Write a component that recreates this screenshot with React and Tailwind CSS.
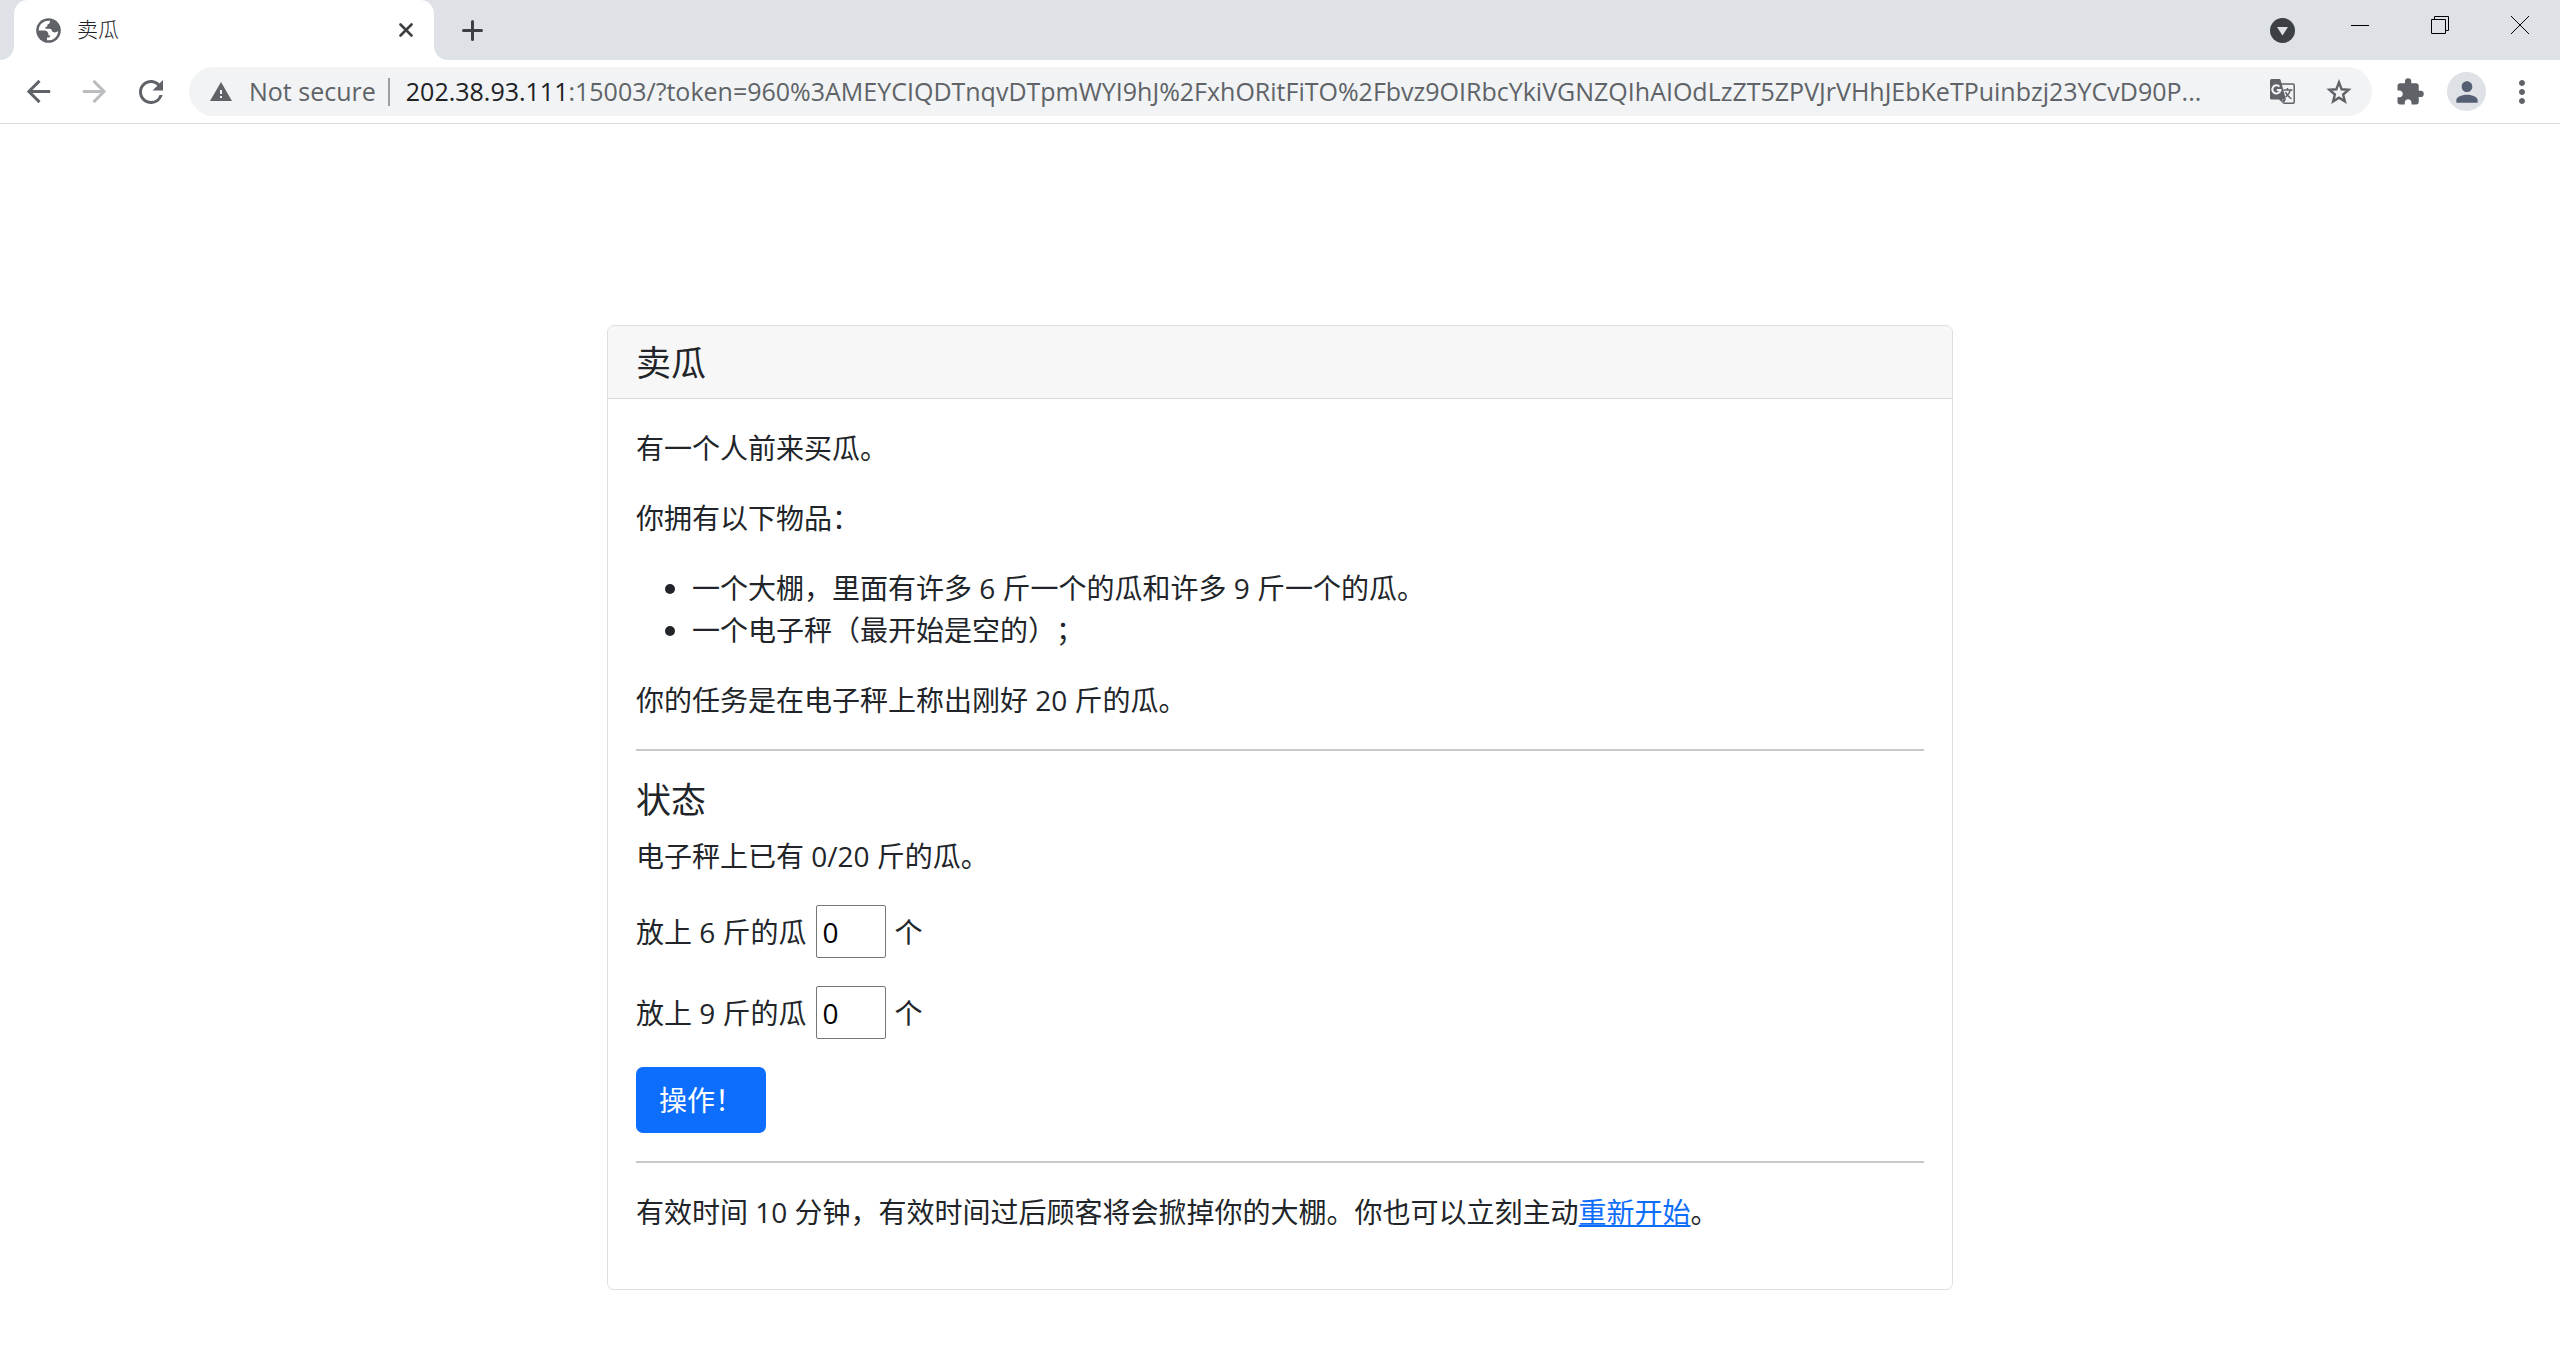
import { useState } from 'react';
import { MdArrowBack, MdArrowForward, MdRefresh, MdWarning, MdExtension, MdPerson, MdMoreVert } from 'react-icons/md';

const host = '202.38.93.111';
const path = ':15003/?token=960%3AMEYCIQDTnqvDTpmWYI9hJ%2FxhORitFiTO%2Fbvz9OIRbcYkiVGNZQIhAIOdLzZT5ZPVJrVHhJEbKeTPuinbzj23YCvD90P...';

function GlobeIcon() {
  return (
    <svg className="size-[25px] shrink-0" viewBox="0 0 25 25" aria-hidden="true">
      <circle cx="12.5" cy="12.5" r="12.3" fill="#5f6368" />
      <path
        fill="#fff"
        d="M2.700 12.500A9.800 9.800 0 0 1 14 2.800C14.200 5 13.300 6 11.500 6.300V7.600C11.500 8.600 10.600 9 9.400 9V10.800H13.500C15.200 10.800 16 11.800 16 13.400C17 13.400 17.500 14.400 18.500 14.400C20 14.400 21 13.600 22.200 13.200A9.800 9.800 0 0 1 11 22.200V19.500H13C14 19.500 14.200 18.600 14.200 17.600H12.600C12.600 14 11 12.500 8 12.500z"
      />
    </svg>
  );
}

function TranslateIcon() {
  return (
    <svg className="h-[26px] w-[25px]" viewBox="0 0 25 26" aria-hidden="true">
      <path d="M11 5h12a1.200 1.200 0 0 1 1.200 1.200V23a1.200 1.200 0 0 1-1.200 1.200H13.500" fill="none" stroke="#5f6368" strokeWidth="1.500" />
      <path d="M1.500 0h7.700a1.500 1.500 0 0 1 1.400 1l5.400 19.500H12l1.800 4.500L9 20.500H1.500A1.500 1.500 0 0 1 0 19V1.500A1.500 1.500 0 0 1 1.500 0z" fill="#5f6368" />
      <path d="M12.500 20.500H16L13.500 24.500z" fill="#5f6368" />
      <path d="M9.500 7.700A4.100 4.100 0 1 0 10.500 11H6.800" fill="none" stroke="#f1f3f4" strokeWidth="2" />
      <path d="M13.500 11H22.500M17.500 9V11M20.500 11C19.500 14.500 17.500 16.500 15.500 18M15.500 13C16.500 15.500 18.500 18 21.500 20" fill="none" stroke="#5f6368" strokeWidth="1.500" />
    </svg>
  );
}

function StarIcon() {
  return (
    <svg className="size-[30px]" viewBox="0 0 24 24" fill="none" stroke="#5f6368" strokeWidth="1.900" aria-hidden="true">
      <path d="M12 4.300L14.100 9.800L19.700 10.200L15.300 14L16.700 19.500L12 16.500L7.300 19.500L8.700 14L4.300 10.200L9.900 9.800z" />
    </svg>
  );
}

function TabStrip() {
  return (
    <div className="flex h-[60px] bg-[#dee1e6]">
      <div className="flex w-[14px] shrink-0 bg-white">
        <div className="w-full rounded-br-[14px] bg-[#dee1e6]" />
      </div>
      <div className="flex w-[420px] items-center rounded-t-[14px] bg-white pr-[18px] pl-[22px]">
        <GlobeIcon />
        <span className="ml-4 flex-1 text-[21px] font-light text-[#202124]">卖瓜</span>
        <button type="button" aria-label="Close tab" className="grid size-5 place-items-center">
          <svg className="size-[14px]" viewBox="0 0 14 14" stroke="#3c4043" strokeWidth="2.6" strokeLinecap="round">
            <path d="M1.500 1.500l11 11M12.500 1.500l-11 11" />
          </svg>
        </button>
      </div>
      <div className="flex w-[14px] shrink-0 bg-white">
        <div className="w-full rounded-bl-[14px] bg-[#dee1e6]" />
      </div>
      <button type="button" aria-label="New tab" className="grid w-12 place-items-center">
        <svg className="size-[21px]" viewBox="0 0 21 21" stroke="#3c4043" strokeWidth="3" strokeLinecap="round">
          <path d="M10.500 1.500v18M1.500 10.500h18" />
        </svg>
      </button>
      <div className="ml-auto flex">
        <button type="button" aria-label="Search tabs" className="grid w-[75px] place-items-center">
          <svg className="size-[25px]" viewBox="0 0 25 25">
            <circle cx="12.500" cy="12.500" r="12.500" fill="#3c4043" />
            <path d="M7 9h11l-5.500 8.500z" fill="#dee1e6" />
          </svg>
        </button>
        <div className="flex h-[50px]">
          <button type="button" aria-label="Minimize" className="grid w-20 place-items-center">
            <svg className="size-[18px]" viewBox="0 0 18 18" shapeRendering="crispEdges">
              <path d="M0 9h18v1H0z" />
            </svg>
          </button>
          <button type="button" aria-label="Restore" className="grid w-20 place-items-center">
            <svg className="size-[18px]" viewBox="0 0 18 18" fill="none" stroke="#000">
              <path d="M.5 3.500h14v14H.5zM3.500 3.500v-3h14v14h-3" />
            </svg>
          </button>
          <button type="button" aria-label="Close" className="grid w-20 place-items-center">
            <svg className="size-[18px]" viewBox="0 0 18 18" stroke="#000">
              <path d="M0 0l18 18M18 0L0 18" />
            </svg>
          </button>
        </div>
      </div>
    </div>
  );
}

function Toolbar() {
  return (
    <div className="flex h-16 items-center border-b border-[#dadce0] bg-white text-[#5f6368]">
      <div className="flex w-[189px] shrink-0 items-center gap-[21px] pl-[21px]">
        <button type="button" aria-label="Back"><MdArrowBack size={35} /></button>
        <button type="button" aria-label="Forward" disabled className="text-[#babcbe]"><MdArrowForward size={35} /></button>
        <button type="button" aria-label="Reload"><MdRefresh size={36} /></button>
      </div>
      <div className="flex h-[49px] min-w-0 flex-1 items-center rounded-full bg-[#f1f3f4] pr-[18px] pl-5 text-[25px]">
        <button type="button" className="flex shrink-0 items-center gap-4">
          <MdWarning size={24} />
          Not secure
        </button>
        <span className="mr-4 ml-3 h-7 w-[2px] bg-[#9aa0a6]" />
        <label htmlFor="url" className="text-[#202124]">{host}</label>
        <input id="url" type="text" defaultValue={path} className="min-w-0 flex-1 text-ellipsis outline-none" />
        <button type="button" aria-label="Translate this page" className="ml-4"><TranslateIcon /></button>
        <button type="button" aria-label="Bookmark this tab" className="ml-[29px]"><StarIcon /></button>
      </div>
      <div className="flex shrink-0 items-center pr-5 pl-[23px]">
        <button type="button" aria-label="Extensions"><MdExtension size={30} /></button>
        <button type="button" aria-label="Profile" className="ml-[22px] grid size-[39px] place-items-center rounded-full bg-[#dee1e6] text-[#555f73]">
          <MdPerson size={32} />
        </button>
        <button type="button" aria-label="Menu" className="ml-[18px]"><MdMoreVert size={36} /></button>
      </div>
    </div>
  );
}

function MelonField({ weight, value, onChange }) {
  const id = `melon-${weight}`;
  return (
    <div className="mb-7 flex items-center gap-[9px]">
      <label htmlFor={id}>放上 {weight} 斤的瓜</label>
      <input
        id={id}
        type="number"
        min="0"
        value={value}
        onChange={(e) => onChange(e.target.value)}
        className="h-[53px] w-[70px] rounded-xs border border-[#767676] bg-white px-[6px] text-black"
      />
      <span>个</span>
    </div>
  );
}

export default function App() {
  const [six, setSix] = useState('0');
  const [nine, setNine] = useState('0');

  return (
    <div lang="zh-CN" className="min-h-screen bg-white font-['Open_Sans','Noto_Sans_CJK_SC',sans-serif] [text-spacing-trim:space-all]">
      <header>
        <TabStrip />
        <Toolbar />
      </header>

      <main className="mx-auto mt-[201px] mb-20 max-w-[1346px] rounded-[7px] border border-[#dfdfdf] text-[28px] leading-[42px] text-[#212529]">
        <h1 className="rounded-t-[6px] border-b border-[#d9d9d9] bg-[#f7f7f7] px-7 pt-4 pb-[14px] text-[35px]">卖瓜</h1>
        <div className="p-7">
          <p className="mb-7">有一个人前来买瓜。</p>
          <p className="mb-7">你拥有以下物品：</p>
          <ul className="mb-7 list-disc pl-14">
            <li>一个大棚，里面有许多 6 斤一个的瓜和许多 9 斤一个的瓜。</li>
            <li>一个电子秤（最开始是空的）；</li>
          </ul>
          <p>你的任务是在电子秤上称出刚好 20 斤的瓜。</p>
          <hr className="my-7 border-t-2 border-[#c8c8c8]" />
          <h2 className="mb-[14px] text-[35px]">状态</h2>
          <p className="mb-7">电子秤上已有 0/20 斤的瓜。</p>
          <form onSubmit={(e) => e.preventDefault()}>
            <MelonField weight={6} value={six} onChange={setSix} />
            <MelonField weight={9} value={nine} onChange={setNine} />
            <button type="submit" className="rounded-[7px] bg-[#0d6efd] px-[23px] py-3 text-white">操作！</button>
          </form>
          <hr className="my-7 border-t-2 border-[#c8c8c8]" />
          <p className="mb-7">
            有效时间 10 分钟，有效时间过后顾客将会掀掉你的大棚。你也可以立刻主动
            <a href="#restart" className="text-[#0d6efd] underline">重新开始</a>。
          </p>
        </div>
      </main>
    </div>
  );
}
